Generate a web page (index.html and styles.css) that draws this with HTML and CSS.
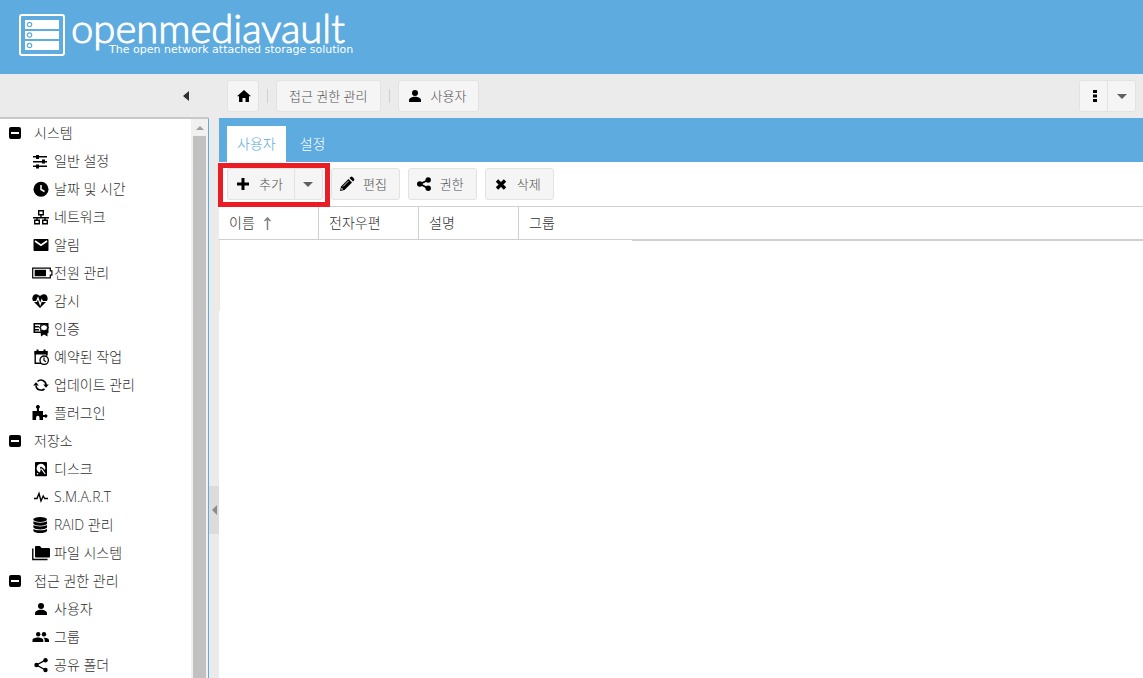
FILE: index.html
```html
<!DOCTYPE html>
<html lang="ko">
<head>
  <meta charset="UTF-8" />
  <title>openmediavault - 사용자</title>
  <meta name="viewport" content="width=device-width, initial-scale=1.0" />
  <link rel="stylesheet" href="styles.css">
</head>
<body>

  <header class="header">
    <svg class="logo-icon" viewBox="0 0 46 42">
      <rect x="1" y="1" width="44" height="40" rx="2" fill="none" stroke="#fff" stroke-width="2"/>
      <path fill="#fff" d="M6 6h34v9H6zM6 17h34v8H6zM6 27h34v9H6z"/>
      <g fill="#fff" stroke="#5dabdf" stroke-width="1.2">
        <circle cx="10.5" cy="10.5" r="2.2"/>
        <circle cx="10.5" cy="21" r="2.2"/>
        <circle cx="10.5" cy="31.5" r="2.2"/>
      </g>
    </svg>
    <div class="logo-text">
      <div class="logo-name">openmediavault</div>
      <div class="logo-tagline">The open network attached storage solution</div>
    </div>
  </header>

  <div class="workspace">

    <!-- Navigation -->
    <aside class="sidebar">
      <div class="sidebar-head">
        <button class="collapse" aria-label="접기"><svg width="6" height="10" viewBox="0 0 6 10"><path fill="#303030" d="M6 0v10L0 5z"/></svg></button>
      </div>
      <div class="sidebar-body">
        <nav class="tree">
          <a class="group" href="#"><svg class="toggle" viewBox="0 0 12 12"><rect width="12" height="12" rx="2"/><path fill="#fff" d="M2 5h8v2H2z"/></svg>시스템</a>
          <a class="item" href="#"><svg class="icon" viewBox="0 0 22 16"><path d="M1 3h14v1.500H1zM1 8h14v1.500H1zM1 12.500h14V14H1z"/><path d="M4 2h3v4H4zM10 6.500h3v4h-3zM4 11.500h3v4H4z"/></svg>일반 설정</a>
          <a class="item" href="#"><svg class="icon" viewBox="0 0 22 16"><circle cx="9" cy="8.300" r="7.500"/><path d="M9 4v4.500l3.500 2" fill="none" stroke="#fff" stroke-width="1.500"/></svg>날짜 및 시간</a>
          <a class="item" href="#"><svg class="icon" viewBox="0 0 22 16"><path d="M6.700 1.700h4.600v4H6.700zM2.700 11.200h4.600v3.600H2.700zM10.700 11.200h4.600v3.600h-4.600zM9 6v3M1 8.700h16M5 9v2M13 9v2" fill="none" stroke="#000" stroke-width="1.400"/></svg>네트워크</a>
          <a class="item" href="#"><svg class="icon" viewBox="0 0 22 16"><rect x="1.500" y="2" width="15" height="12" rx="1"/><path d="M3 4l6 4.300L15 4" fill="none" stroke="#fff" stroke-width="1.700"/></svg>알림</a>
          <a class="item" href="#"><svg class="icon" viewBox="0 0 22 16"><path d="M.7 3.200h17.600v2.600h1.600v4.400h-1.600v2.600H.7z" fill="none" stroke="#000" stroke-width="1.200"/><path d="M2.700 4.800H14v6.400H2.700z"/></svg>전원 관리</a>
          <a class="item" href="#"><svg class="icon" viewBox="0 0 22 16"><path d="M8 15L1.500 8.600C-.8 6 .4 1.200 4.200 1.200 6 1.200 7.300 2.200 8 3.300 8.700 2.200 10 1.200 11.800 1.200c3.800 0 5 4.800 2.700 7.400z"/><path d="M0 8.500h4.500L6 5l2.200 6.500 1.600-4.500.8 1.500H16" fill="none" stroke="#fff" stroke-width="1.200"/></svg>감시</a>
          <a class="item" href="#"><svg class="icon" viewBox="0 0 22 16"><path d="M2.300 2.800h13.400v8.500H2.300z" fill="none" stroke="#000" stroke-width="1.600"/><path d="M3 5h4v1.500H3zM3 8h4v1.500H3z"/><path d="M8.500 9h7v6.500L12 13.500l-3 2z"/><path d="M12 2l1.600 1.300 2-.2.2 2L17 6.600l-1.200 1.500-.2 2-2-.2L12 11.200l-1.600-1.300-2 .2-.2-2L7 6.600l1.200-1.500.2-2 2 .2z"/><path d="M12 3.800l1 .9 1.500-.1.100 1.300.8.800-.8.800-.1 1.300-1.500-.1-1 .9-1-.9-1.500.1-.1-1.300-.8-.8.800-.8.100-1.300 1.500.1z" fill="#fff"/></svg>인증</a>
          <a class="item" href="#"><svg class="icon" viewBox="0 0 22 16"><path d="M9 14.200H3.200V2.800h11.600v4" fill="none" stroke="#000" stroke-width="1.400"/><path d="M2.500 2h13v3.500h-13zM4.500.5h2V3h-2zM11.500.5h2V3h-2z"/><circle cx="12.200" cy="11.200" r="4.200" fill="#fff" stroke="#000" stroke-width="1.300"/><path d="M12 8.500v3l2 1.300" fill="none" stroke="#000" stroke-width="1.200"/></svg>예약된 작업</a>
          <a class="item" href="#"><svg class="icon" viewBox="0 0 22 16"><path d="M4 9a5 5 0 0 0 5 4M5.500 4.500A5 5 0 0 1 14 8M4 8.500c0-1 .2-1.500.5-2.200M9 13.200c1.500 0 2.800-.5 3.500-1.300" fill="none" stroke="#000" stroke-width="1.600"/><path d="M1.200 8.500h5.600L4 5.300zM11.200 7.500h5.600L14 10.800z"/></svg>업데이트 관리</a>
          <a class="item" href="#"><svg class="icon" viewBox="0 0 22 16"><path d="M.5 6h4.400V3.500a1.900 1.900 0 1 1 2 0V6H11v4h1.500a1.600 1.600 0 1 1 0 2H11v3H7.500v-2.500a1.700 1.700 0 0 0-3.400 0V15H.5z"/></svg>플러그인</a>

          <a class="group" href="#"><svg class="toggle" viewBox="0 0 12 12"><rect width="12" height="12" rx="2"/><path fill="#fff" d="M2 5h8v2H2z"/></svg>저장소</a>
          <a class="item" href="#"><svg class="icon" viewBox="0 0 22 16"><rect x="3" y="1" width="12" height="14.300" rx="1"/><path d="M8 11.500a4.400 4.400 0 1 1 5-2.500l-2.500-2.500-1.500 1z" fill="#fff"/><path d="M8.800 6.800l4.400 6.200" stroke="#fff" stroke-width="1.200"/><circle cx="9" cy="6.700" r="1"/><circle cx="5.500" cy="12.700" r=".8" fill="#fff"/></svg>디스크</a>
          <a class="item" href="#"><svg class="icon" viewBox="0 0 22 16"><path d="M2 9.500h3l2-5 2 7.500 2.200-5 1.500 2.500H16" fill="none" stroke="#000" stroke-width="1.400"/></svg>S.M.A.R.T</a>
          <a class="item" href="#"><svg class="icon" viewBox="0 0 22 16"><ellipse cx="8.200" cy="2.500" rx="6.800" ry="2.400"/><path d="M1.400 4.300c2 1.900 11.600 1.900 13.600 0v2.500c-1.500 2.500-12.100 2.500-13.600 0zM1.400 8.100c2 1.900 11.600 1.900 13.600 0v2.500c-1.500 2.500-12.100 2.500-13.600 0zM1.400 11.900c2 1.900 11.600 1.900 13.600 0v2c-1.500 2.700-12.100 2.700-13.600 0z"/></svg>RAID 관리</a>
          <a class="item" href="#"><svg class="icon" viewBox="0 0 22 16"><path d="M3 2q0-1 1-1h4l1.500 2H17q1 0 1 1v7.500q0 1-1 1H4q-1 0-1-1z"/><path d="M.8 3.500v11H15.500" fill="none" stroke="#000" stroke-width="1.400"/></svg>파일 시스템</a>

          <a class="group" href="#"><svg class="toggle" viewBox="0 0 12 12"><rect width="12" height="12" rx="2"/><path fill="#fff" d="M2 5h8v2H2z"/></svg>접근 권한 관리</a>
          <a class="item" href="#"><svg class="icon" viewBox="0 0 22 16"><circle cx="9" cy="5" r="3"/><path d="M3 14v-1.500c0-5 12-5 12 0V14z"/></svg>사용자</a>
          <a class="item" href="#"><svg class="icon" viewBox="0 0 22 16"><circle cx="6.200" cy="5.200" r="2.200"/><circle cx="12" cy="5.200" r="2.200"/><path d="M.5 13v-1.800c0-3.600 10.800-3.600 10.800 0V13zM12.700 13v-1.800c0-1-.5-1.800-1.400-2.400 2.300-.2 5.700.5 5.700 2.400V13z"/></svg>그룹</a>
          <a class="item" href="#"><svg class="icon" viewBox="0 0 22 16"><path d="M13.500 3.200L4.500 8l9 5" fill="none" stroke="#000" stroke-width="1.400"/><circle cx="13.500" cy="3.200" r="2.200"/><circle cx="4.500" cy="8" r="2.200"/><circle cx="13.500" cy="13" r="2.200"/></svg>공유 폴더</a>
        </nav>
        <div class="scrollbar">
          <svg width="8" height="4" viewBox="0 0 8 4"><path fill="#a0a0a0" d="M0 4h8L4 0z"/></svg>
          <div class="thumb"></div>
        </div>
      </div>
    </aside>

    <!-- Splitter between navigation and content -->
    <div class="splitter">
      <button class="handle" aria-label="접기"><svg width="5" height="10" viewBox="0 0 5 10"><path fill="#8c8c8c" d="M5 0v10L0 5z"/></svg></button>
    </div>

    <main class="content">
      <div class="breadcrumb">
        <button class="btn btn-home" aria-label="홈"><svg width="14" height="14" viewBox="0 0 14 14"><path d="M7 1l7 6.300h-2V13H8.500V9h-3v4H2V7.300H0z"/></svg></button>
        <span class="sep"></span>
        <button class="btn btn-crumb">접근 권한 관리</button>
        <span class="sep"></span>
        <button class="btn btn-user"><svg width="16" height="16" viewBox="0 0 16 16"><circle cx="8" cy="5" r="3"/><path d="M2 14v-1.500c0-5 12-5 12 0V14z"/></svg>사용자</button>
        <div class="split split-right">
          <button class="btn" aria-label="메뉴"><svg width="4" height="14" viewBox="0 0 4 14"><path d="M0 1h4v3H0zM0 5.500h4v3H0zM0 10h4v3H0z"/></svg></button>
          <button class="btn btn-arrow" aria-label="더 보기"><svg width="10" height="5" viewBox="0 0 10 5"><path fill="#606060" d="M0 0h10L5 5z"/></svg></button>
        </div>
      </div>

      <div class="tabs">
        <button class="tab active">사용자</button>
        <button class="tab">설정</button>
      </div>

      <div class="toolbar">
        <div class="split">
          <button class="btn"><svg width="16" height="16" viewBox="0 0 16 16"><path d="M6.500 2h3v4.500H14v3H9.500V14h-3V9.500H2v-3h4.500z"/></svg>추가</button>
          <button class="btn btn-arrow" aria-label="더 보기"><svg width="10" height="5" viewBox="0 0 10 5"><path fill="#606060" d="M0 0h10L5 5z"/></svg></button>
          <div class="highlight"></div>
        </div>
        <button class="btn"><svg width="16" height="16" viewBox="0 0 16 16"><path d="M1 15l1-4.500L9.500 3 13 6.500 5.500 14zM10.500 2l1-1q1-.8 2 0L15 2.500q.8 1 0 2l-1 1z"/><path d="M4 10.500L9.500 5" stroke="#fff" stroke-width=".8"/><path d="M2.500 12.500l1 1" stroke="#fff" stroke-width="1.200"/></svg>편집</button>
        <button class="btn"><svg width="16" height="16" viewBox="0 0 16 16"><path d="M12.200 4L4 8l8.200 4.200" fill="none" stroke="#000" stroke-width="1.800"/><circle cx="12.200" cy="4" r="2.700"/><circle cx="3.800" cy="8" r="2.800"/><circle cx="12.200" cy="12.200" r="2.700"/></svg>권한</button>
        <button class="btn"><svg width="16" height="16" viewBox="0 0 16 16"><path d="M4 4.500l8 8M12 4.500l-8 8" stroke="#000" stroke-width="3.400"/></svg>삭제</button>
      </div>

      <table class="grid">
        <thead>
          <tr>
            <th>이름<svg class="sort" width="7" height="13" viewBox="0 0 7 13"><path d="M3.500 1v12M.5 4l3-3 3 3" fill="none" stroke="#808080" stroke-width="1.500"/></svg></th>
            <th>전자우편</th>
            <th>설명</th>
            <th>그룹</th>
          </tr>
        </thead>
      </table>
      <div class="grid-body">
        <div class="row-mark"></div>
        <div class="grid-line"></div>
      </div>
    </main>

  </div>

</body>
</html>
```
FILE: styles.css
```css
* {
  box-sizing: border-box;
}
body {
  margin: 0;
  height: 100vh;
  display: flex;
  flex-direction: column;
  overflow: hidden;
  background: #fff;
  color: #303030;
  font-family: "Open Sans", "Noto Sans CJK KR", sans-serif;
  font-size: 14px;
  font-weight: 300;
  line-height: 20px;
}
button {
  font: inherit;
  cursor: pointer;
}
svg {
  flex: none;
}

/* Header */
.header {
  flex: none;
  display: flex;
  height: 74px;
  padding: 14px 19px;
  background: #5dabdf;
  color: #fff;
}
.logo-icon {
  width: 46px;
  height: 42px;
}
.logo-text {
  margin-left: 6px;
}
.logo-name {
  height: 28px;
  font-family: Lato, sans-serif;
  font-size: 40px;
  font-weight: 300;
  line-height: 28px;
  -webkit-text-stroke: 1px #fff;
}
.logo-tagline {
  margin-left: 38px;
  font-family: "DejaVu Sans", sans-serif;
  font-size: 11px;
  font-weight: 400;
  line-height: 16px;
}

.workspace {
  flex: 1;
  display: flex;
  min-height: 0;
}

/* Navigation */
.sidebar {
  flex: none;
  display: flex;
  flex-direction: column;
  width: 209px;
}
.sidebar-head {
  flex: none;
  display: flex;
  align-items: center;
  justify-content: flex-end;
  height: 45px;
  padding-right: 16px;
  background: #ebebeb;
  border-bottom: 2px solid #c8c8c8;
}
.collapse {
  display: flex;
  padding: 4px;
  border: 0;
  background: none;
}
.sidebar-body {
  flex: 1;
  display: flex;
  min-height: 0;
  border-right: 1px solid #5dabdf;
}
.tree {
  flex: 1;
  overflow: hidden;
}
.tree a {
  display: flex;
  align-items: center;
  height: 28px;
  color: #303030;
  text-decoration: none;
  white-space: nowrap;
}
.tree .group {
  padding-left: 9px;
}
.tree .item {
  padding-left: 32px;
}
.toggle {
  width: 12px;
  height: 12px;
  margin-right: 13px;
}
.icon {
  width: 22px;
  height: 16px;
}
.scrollbar {
  display: flex;
  flex-direction: column;
  align-items: center;
  width: 17px;
  padding-top: 7px;
  background: #f1f1f1;
}
.thumb {
  flex: 1;
  width: 13px;
  margin-top: 6px;
  background: #c1c1c1;
}

.splitter {
  flex: none;
  display: flex;
  align-items: center;
  width: 10px;
  padding-top: 268px;
  background: #ebebeb;
}
.handle {
  display: flex;
  align-items: center;
  justify-content: center;
  width: 10px;
  height: 48px;
  padding: 0;
  border: 0;
  background: #dcdcdc;
}

/* Content */
.content {
  flex: 1;
  display: flex;
  flex-direction: column;
  min-width: 0;
}
.breadcrumb {
  flex: none;
  display: flex;
  align-items: center;
  height: 44px;
  padding: 0 7px 0 8px;
  background: #ebebeb;
}
.sep {
  width: 1px;
  height: 14px;
  margin: 0 8px;
  background: #cfcfcf;
}
.btn {
  display: flex;
  align-items: center;
  gap: 8px;
  height: 32px;
  padding: 0 12px 0 7px;
  border: 1px solid #e2e2e2;
  border-radius: 3px;
  background: #f5f5f5;
  color: #505050;
  font-size: 13px;
  white-space: nowrap;
}
.btn-home {
  justify-content: center;
  width: 32px;
  padding: 0 0 0 2px;
}
.btn-crumb {
  padding: 0 12px;
}
.btn-user {
  padding-left: 8px;
}
.split {
  position: relative;
  display: flex;
}
.split .btn:first-child {
  padding-right: 11px;
  border-radius: 3px 0 0 3px;
}
.split .btn-arrow {
  justify-content: center;
  width: 28px;
  padding: 0;
  border-left: 0;
  border-radius: 0 3px 3px 0;
}
.split-right {
  margin-left: auto;
}
.split-right .btn:first-child {
  justify-content: center;
  width: 29px;
  padding: 0 0 0 3px;
}

.tabs {
  flex: none;
  display: flex;
  align-items: flex-end;
  gap: 4px;
  height: 44px;
  padding-left: 8px;
  background: #5dabdf;
}
.tab {
  height: 36px;
  padding: 0 10px;
  border: 0;
  background: none;
  color: #fff;
}
.tab.active {
  background: #fff;
  color: #5dabdf;
}

.toolbar {
  flex: none;
  display: flex;
  align-items: center;
  gap: 8px;
  height: 44px;
  padding-left: 8px;
}
/* Red frame around the add button */
.highlight {
  position: absolute;
  top: -5px;
  right: -7px;
  bottom: -7px;
  left: -9px;
  border: 5px solid #ea1c24;
  pointer-events: none;
}

.grid {
  width: 100%;
  border-spacing: 0;
  table-layout: fixed;
}
.grid th {
  height: 34px;
  padding: 0 10px;
  border-top: 1px solid #cfcfcf;
  border-bottom: 1px solid #cfcfcf;
  font-weight: 300;
  text-align: left;
}
.grid th:not(:last-child) {
  width: 100px;
  border-right: 1px solid #cfcfcf;
}
.sort {
  margin-left: 9px;
  vertical-align: -2px;
}
.grid-body {
  flex: 1;
  display: flex;
  justify-content: space-between;
}
.row-mark {
  width: 1px;
  height: 71px;
  background: #f5e9c8;
}
.grid-line {
  width: calc(100% - 413px);
  height: 1px;
  background: #cfcfcf;
}
```
